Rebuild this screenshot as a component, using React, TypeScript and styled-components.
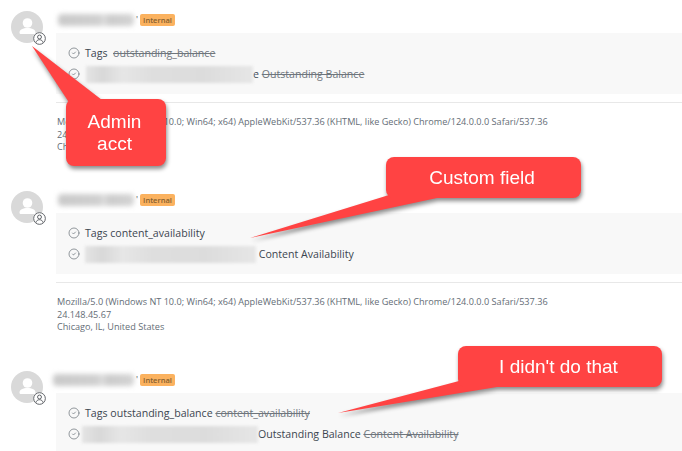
import { ReactNode } from "react"
import styled, { createGlobalStyle } from "styled-components"
import { CircleCheck } from "lucide-react"

const GlobalStyle = createGlobalStyle`
    html, body {
        margin: 0;
        background: #fff;
        font-family: "Open Sans", "Noto Sans", sans-serif;
    }
`

const Page = styled.div`
    position: relative;
    width: 682px;
    height: 451px;
    overflow: hidden;
    background: #fff;
`

const Entry = styled.div`
    display: flex;
    gap: 13px;
    height: 169px;
    padding: 11px 0 0 11px;
`

const AvatarWrap = styled.div`
    position: relative;
    flex: none;
    width: 32px;
    height: 32px;
`

const AvatarBadge = styled.div`
    position: absolute;
    right: -3px;
    bottom: -2px;
    width: 13px;
    height: 13px;
    display: flex;
    background: #fff;
    border-radius: 50%;
`

const Body = styled.div`
    flex: 1;
    min-width: 0;
`

const NameRow = styled.div`
    display: flex;
    align-items: center;
    height: 22px;
    margin-top: -2px;
    margin-bottom: 2px;
`

const NameBlur = styled.div<{ $shift: number }>`
    flex: none;
    width: ${(p) => 80 + p.$shift}px;
    height: 24px;
    margin-left: -${(p) => p.$shift}px;
    display: flex;
    align-items: center;
    padding: 0 2px;
    box-sizing: border-box;
    background: #fff;
`

const NameSmudge = styled.div`
    width: 100%;
    height: 12px;
    border-radius: 4px;
    background: linear-gradient(90deg, #cacaca 0, #d0d0d0 55%, #dedede 60%, #cccccc 68%, #d4d4d4 100%);
    filter: blur(2.5px);
`

const Tick = styled.span`
    flex: none;
    width: 3px;
    font-size: 9px;
    color: #555;
    align-self: flex-start;
    margin-top: 4px;
`

const Badge = styled.span`
    flex: none;
    margin-left: 1px;
    width: 35px;
    height: 12px;
    border-radius: 2px;
    background: #fbb25f;
    color: #86602f;
    font-size: 7.5px;
    font-weight: 600;
    line-height: 12px;
    text-align: center;
`

const Panel = styled.div`
    display: flex;
    flex-direction: column;
    gap: 5px;
    height: 61px;
    padding: 12px 0 0 12px;
    box-sizing: border-box;
    background: #f8f8f8;
`

const Row = styled.div`
    display: flex;
    align-items: center;
    height: 16px;
    font-size: 10.6px;
    color: #3c4650;
    white-space: pre;
`

const RowIcon = styled(CircleCheck)`
    flex: none;
    width: 12px;
    height: 12px;
    margin-right: 5px;
    color: #6f777e;
`

const Gone = styled.span`
    color: #6f767d;
    text-decoration: line-through;
`

const RowSmudge = styled.span<{ $width: number; $shift: number }>`
    display: block;
    flex: none;
    width: ${(p) => p.$width}px;
    height: 17px;
    margin-left: ${(p) => p.$shift}px;
    background: linear-gradient(90deg, #e4e4e4 0, #d8d8d8 10%, #e6e6e6 22%, #dedede 40%, #dcdcdc 70%, #e6e6e6 100%);
    filter: blur(1.5px);
`

const Divider = styled.div`
    height: 1px;
    margin-top: 8px;
    background: #e8e8e8;
`

const Meta = styled.div`
    margin-top: 13px;
    margin-left: 1px;
    font-size: 9.15px;
    line-height: 12.5px;
    color: #646d76;
    white-space: nowrap;
`

const Callout = styled.div<{ $x: number; $y: number; $w: number; $h: number }>`
    position: absolute;
    left: ${(p) => p.$x}px;
    top: ${(p) => p.$y}px;
    width: ${(p) => p.$w}px;
    height: ${(p) => p.$h}px;
    filter: drop-shadow(1px 3px 2px rgba(0, 0, 0, 0.45));
`

const Bubble = styled.div`
    position: relative;
    width: 100%;
    height: 100%;
    display: flex;
    align-items: center;
    justify-content: center;
    box-sizing: border-box;
    padding-right: 3px;
    border-radius: 8px;
    background: #ff4343;
    color: #fff;
    font-family: "Liberation Sans", Arial, sans-serif;
    font-size: 19px;
    line-height: 22px;
    text-align: center;
`

const Tail = styled.svg`
    position: absolute;
    left: 0;
    top: 0;
    overflow: visible;
    fill: #ff4343;
`

const Avatar = () => (
    <AvatarWrap>
        <svg width="32" height="32" viewBox="0 0 32 32">
            <circle cx="16" cy="16" r="16" fill="#d9d9d9" />
            <circle cx="16.5" cy="12" r="4.8" fill="#fff" />
            <path d="M8.5 21.5c0-3 3.5-4.5 8-4.5s8 1.500 8 4.500c0 1-.6 1.500-1.500 1.500h-13c-.9 0-1.500-.5-1.500-1.500z" fill="#fff" />
        </svg>
        <AvatarBadge>
            <svg width="13" height="13" viewBox="0 0 14 14" fill="none" stroke="#55595e" strokeWidth="1">
                <circle cx="7" cy="7" r="6.300" />
                <circle cx="7" cy="5.400" r="2.100" />
                <path d="M3.300 11.300c.3-2 1.900-3 3.700-3s3.400 1 3.700 3" />
            </svg>
        </AvatarBadge>
    </AvatarWrap>
)

const Item = ({ rows, meta, nameShift = 0 }: { rows: ReactNode[]; meta?: boolean; nameShift?: number }) => (
    <Entry>
        <Avatar />
        <Body>
            <NameRow>
                <NameBlur $shift={nameShift}>
                    <NameSmudge />
                </NameBlur>
                <Tick>'</Tick>
                <Badge>Internal</Badge>
            </NameRow>
            <Panel>
                {rows.map((row, i) => (
                    <Row key={i}>
                        <RowIcon strokeWidth={1.5} />
                        {row}
                    </Row>
                ))}
            </Panel>
            <Divider />
            {meta && (
                <Meta>
                    Mozilla/5.0 (Windows NT 10.0; Win64; x64) AppleWebKit/537.36 (KHTML, like Gecko) Chrome/124.0.0.0 Safari/537.36
                    <br />
                    24.148.45.67
                    <br />
                    Chicago, IL, United States
                </Meta>
            )}
        </Body>
    </Entry>
)

const App = () => {
    return (
        <Page>
            <GlobalStyle />
            <Item
                meta
                rows={[
                    <>
                        Tags  <Gone>outstanding_balance</Gone>
                    </>,
                    <>
                        <RowSmudge $width={167} $shift={1} />
                        {"e "}
                        <Gone>Outstanding Balance</Gone>
                    </>,
                ]}
            />
            <Item
                meta
                rows={[
                    <>Tags content_availability</>,
                    <>
                        <RowSmudge $width={171} $shift={0} />
                        {" Content Availability"}
                    </>,
                ]}
            />
            <Item
                nameShift={5}
                rows={[
                    <>
                        Tags outstanding_balance <Gone>content_availability</Gone>
                    </>,
                    <>
                        <RowSmudge $width={176} $shift={-3} />
                        {"Outstanding Balance "}
                        <Gone>Content Availability</Gone>
                    </>,
                ]}
            />
            <Callout $x={66} $y={99} $w={100} $h={67}>
                <Tail style={{ left: -66, top: -99 }} width="682" height="451">
                    <path d="M32 46 L102 100 L70 104 Z" />
                </Tail>
                <Bubble>
                    Admin
                    <br />
                    acct
                </Bubble>
            </Callout>
            <Callout $x={386} $y={157} $w={195} $h={41}>
                <Tail style={{ left: -386, top: -157 }} width="682" height="451">
                    <path d="M250 238 L389 195 L437 198 Z" />
                </Tail>
                <Bubble>Custom field</Bubble>
            </Callout>
            <Callout $x={458} $y={346} $w={204} $h={41}>
                <Tail style={{ left: -458, top: -346 }} width="682" height="451">
                    <path d="M338 413 L459 381 L497 387 Z" />
                </Tail>
                <Bubble>I didn't do that</Bubble>
            </Callout>
        </Page>
    )
}

export default App
